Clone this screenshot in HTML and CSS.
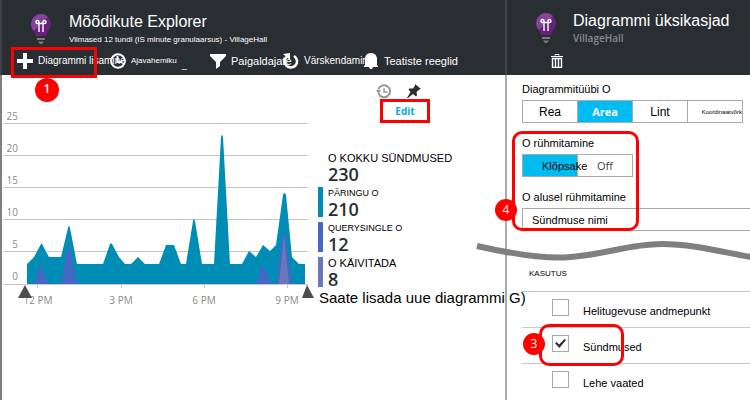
FILE: index.html
```html
<!DOCTYPE html>
<html lang="et">
<head>
<meta charset="utf-8">
<title>Mõõdikute Explorer</title>
<link rel="stylesheet" href="styles.css">
</head>
<body>
<svg class="sprite" aria-hidden="true">
  <symbol id="bulb" viewBox="0 0 20 32">
    <path d="M10 0a10 10 0 0 0-10 10c0 5 4 7 5 12h10c1-5 5-7 5-12A10 10 0 0 0 10 0z" fill="#68217a"/>
    <path d="M10 0a10 10 0 0 0-10 10c0 3 1.300 5 2.600 7L17 3A10 10 0 0 0 10 0z" fill="#83449a"/>
    <path d="M8 18V9.500M12 18V9.500M8 9.500H6.500a1.500 1.500 0 1 1 1.500-1.500zM12 9.500h1.500a1.500 1.500 0 1 0-1.500-1.500zM8 9.500h4" fill="none" stroke="#fff" stroke-width="1.400"/>
    <path d="M6 24h8v2H6zM7 27.500h6l-2 2.500H9z" fill="#777b7e"/>
  </symbol>
</svg>
<div class="app">
  <main class="blade blade-main">
    <header class="bar">
      <div class="heading">
        <svg class="bulb"><use href="#bulb"/></svg>
        <div>
          <h1>Mõõdikute Explorer</h1>
          <p class="scope">Viimased 12 tundi (IS minute granulaarsus) - VillageHall</p>
        </div>
      </div>
      <nav class="tools">
        <button type="button" class="medium"><svg class="icon" viewBox="0 0 16 16"><path d="M6 0h4v6h6v4h-6v6H6v-6H0V6h6z"/></svg>Diagrammi lisamine</button>
        <button type="button" class="small"><svg class="icon" viewBox="0 0 16 16"><circle cx="8" cy="8" r="6.800" fill="none" stroke="#fff" stroke-width="2"/><path d="M7.500 3v6h5" fill="none" stroke="#fff" stroke-width="2"/></svg><span>Ajavahemiku</span><span class="dash">_</span></button>
        <button type="button"><svg class="icon" viewBox="0 0 16 16"><path d="M0 1h16v2l-6 6v4l-4 3V9L0 3z"/></svg>Paigaldajate</button>
        <button type="button" class="medium"><svg class="icon" viewBox="0 0 16 16"><path d="M4 3.500A6.200 6.200 0 1 0 11 3" fill="none" stroke="#fff" stroke-width="2.600"/><path d="M0 1L7 0v7z"/></svg>Värskendamine</button>
        <button type="button"><svg class="icon" viewBox="0 0 16 16"><path d="M2 12V6c0-8 12-8 12 0v6l1 1v1h-5l-1 2H7l-1-2H1v-1z"/></svg>Teatiste reeglid</button>
      </nav>
    </header>
    <div class="content">
      <div class="chart-tools">
        <div class="chart-icons">
          <svg class="history" viewBox="0 0 16 15"><path d="M2.500 9.500a6 6 0 1 0-.2-4" fill="none" stroke="#95989a" stroke-width="2"/><path d="M0 6h5L2.500 10z" fill="#95989a"/><path d="M8 4v4h3.500" fill="none" stroke="#95989a" stroke-width="1.500"/></svg>
          <svg class="pin" viewBox="0 0 14 14"><path d="M8 0l6 5-1.500.5-3 2.500.5 3.500-1 1-3-2.500L1 14H0l3.500-6L1.500 5.500l1-1L6 4.500l2-3z" fill="#292e32"/></svg>
        </div>
        <button type="button" class="edit">Edit</button>
      </div>
      <div class="chart-row">
        <svg class="chart" viewBox="0 0 316 198" role="img" aria-label="Sündmused">
          <path class="grid" d="M1 12.500h305M1 44.500h305M1 76.500h305M1 108.500h305M1 140.500h305"/>
          <path fill="#008db5" d="M25 173V153L32 146 39 133Q39.500 131.500 40 133L47 146H59L66 117Q67 113 68 117L75 153H101L108 133Q109 131.500 110 133L117 146 123 153H129L136 146 143 153H157L164 134H172L179 153H184L191 110Q192 106 193 110L200 153H212L219 26Q220 22 221 26L228 153H240L247 140 254 146 261 134 268 140 274 134 281 84Q282.500 80 284 84L290 146 297 153H303V173z"/>
          <path fill="#4668c5" d="M32 173L39 152 46 173zM59 173L66 136Q67 132 68 136L75 173zM254 173L261 153 269 173zM274 173L281 122Q282 119 283 122L290 173z"/>
          <path fill="#6878bb" d="M277 173L282 125 287 173z"/>
          <path class="grid" d="M1 173.500h305M35.500 174v3M119.500 174v3M202.500 174v3M285.500 174v3"/>
          <g class="axis end"><text x="16" y="9">25</text><text x="16" y="41">20</text><text x="16" y="73">15</text><text x="16" y="105">10</text><text x="16" y="137">5</text><text x="16" y="169">0</text></g>
          <g class="axis mid"><text x="36" y="193">12 PM</text><text x="119" y="193">3 PM</text><text x="202" y="193">6 PM</text><text x="285" y="193">9 PM</text></g>
          <path fill="#4d4d4d" d="M23 174l7 13H16zM305 174l7 13H300z"/>
        </svg>
        <dl class="legend">
          <div class="total"><dt class="wide">O KOKKU SÜNDMUSED</dt><dd>230</dd></div>
          <div class="teal"><dt>PÄRINGU O</dt><dd>210</dd></div>
          <div class="blue"><dt>QUERYSINGLE O</dt><dd>12</dd></div>
          <div class="violet"><dt class="wide">O KÄIVITADA</dt><dd>8</dd></div>
        </dl>
      </div>
    </div>
  </main>
  <aside class="blade blade-side">
    <header class="bar">
      <div class="heading">
        <svg class="bulb"><use href="#bulb"/></svg>
        <div>
          <h2>Diagrammi üksikasjad</h2>
          <p class="place">VillageHall</p>
        </div>
      </div>
      <button type="button" class="trash" aria-label="Kustuta"><svg viewBox="0 0 12 14"><path d="M4 1.500V.5h4v1M0 2.500h12" fill="none" stroke="#fff"/><path d="M1.500 4.500h9v9h-9zM4.500 5v8M7.500 5v8" fill="none" stroke="#fff" stroke-width="1.400"/></svg></button>
    </header>
    <form class="details">
      <div class="field" role="group" aria-labelledby="type-label">
        <span id="type-label" class="caption">Diagrammitüübi O</span>
        <div class="segments four">
          <button type="button">Rea</button><button type="button" class="on">Area</button><button type="button">Lint</button><button type="button" class="tiny">Koordinaatvõrk</button>
        </div>
      </div>
      <div class="field" role="group" aria-labelledby="group-label">
        <span id="group-label" class="caption">O rühmitamine</span>
        <div class="segments two">
          <button type="button" class="click">Klõpsake</button><button type="button" class="off">Off</button>
        </div>
      </div>
      <div class="field">
        <label class="caption" for="group-by">O alusel rühmitamine</label>
        <input id="group-by" type="text" value="Sündmuse nimi">
      </div>
      <h3>KASUTUS</h3>
      <ul class="usage">
        <li><input type="checkbox" id="m1"><label for="m1">Helitugevuse andmepunkt</label></li>
        <li><input type="checkbox" id="m2" checked><label for="m2">Sündmused</label></li>
        <li><input type="checkbox" id="m3"><label for="m3">Lehe vaated</label></li>
      </ul>
    </form>
    <svg class="wave" viewBox="0 0 280 30"><path d="M5 13C40 21 72 25 92 24.500C130 23 155 11 190 11C220 11 250 19 284 25" fill="none" stroke="#7f7f7f" stroke-width="6"/></svg>
    <span class="ring ring-group"></span><span class="badge badge-4">4</span>
    <span class="ring ring-events"></span><span class="badge badge-3">3</span>
  </aside>
  <span class="ring ring-add"></span><span class="badge badge-1">1</span>
  <p class="note">Saate lisada uue diagrammi G)</p>
</div>
</body>
</html>
```
FILE: styles.css
```css
* { box-sizing: border-box; }
body { margin: 0; background: #fff; color: #000; font: 11px/16px "Liberation Sans", Arial, sans-serif; overflow: hidden; }
h1, h2, h3, p, dl, dd, ul { margin: 0; padding: 0; font-weight: 400; }
button { border: 0; padding: 0; background: none; color: inherit; font: inherit; cursor: pointer; }
.sprite { position: absolute; width: 0; height: 0; }
.app { position: relative; display: grid; grid-template-columns: minmax(0, 1fr) 245px; min-height: 100vh; }
.blade { display: flex; flex-direction: column; }
.blade-main { border-left: 2px solid #808080; }
.blade-side { position: relative; border-left: 2px solid #aaa; }

.bar { height: 75px; background: #292e32; color: #fff; }
.blade-main .bar { margin-left: -2px; border-left: 2px solid #3d4145; padding: 12px 0 0 15px; }
.blade-side .bar { margin-left: -2px; border-left: 2px solid #42464a; padding: 11px 0 0 14px; }
.heading { display: flex; gap: 18px; height: 36px; }
.blade-main .heading { padding-left: 14px; }
.blade-side .heading { padding-left: 15px; gap: 17px; }
.bulb { width: 20px; height: 32px; margin-top: 2px; flex: none; }
h1, h2 { font-size: 16px; line-height: 20px; white-space: nowrap; }
.scope { font-size: 8px; line-height: 16px; white-space: nowrap; }
.place { color: #85898c; font: 600 10px/14px "Open Sans", sans-serif; }

.tools { display: grid; grid-template-columns: 93px 100px 73px 80px 1fr; height: 26px; align-items: center; }
.tools button { display: flex; align-items: center; gap: 5px; width: 0; white-space: nowrap; }
.tools .medium { font-size: 10px; }
.tools .small { font-size: 8px; }
.dash { padding: 8px 0 0; font-size: 9px; }
.icon { width: 16px; height: 16px; flex: none; fill: #fff; position: relative; }
.trash { display: block; width: 12px; height: 14px; margin: 7px 0 0 30px; }
.trash svg { display: block; width: 12px; height: 14px; }

.content { padding-top: 8px; }
.chart-tools { display: flex; flex-direction: column; width: 50px; margin-left: auto; margin-right: 75px; }
.chart-icons { display: flex; align-items: center; justify-content: center; gap: 15px; height: 16px; padding-right: 10px; margin-left: -4px; }
.history { width: 16px; height: 15px; flex: none; }
.pin { width: 14px; height: 14px; flex: none; }
.edit { height: 24px; border: 3px solid #f00; color: #00abec; font: 700 10px/16px "Open Sans", sans-serif; }
.chart-row { display: flex; align-items: flex-start; margin-top: -12px; }
.chart { width: 316px; height: 198px; flex: none; overflow: visible; }
.grid { stroke: #c8c8c8; fill: none; }
.axis { font: 10px "Open Sans", sans-serif; fill: #8a8a8a; }
.end { text-anchor: end; }
.mid { text-anchor: middle; }
.legend { display: grid; gap: 5px; margin-top: 41px; }
.legend div { height: 30px; border-left: 5px solid transparent; padding-left: 5px; white-space: nowrap; }
.legend .teal { border-color: #008db5; }
.legend .blue { border-color: #4668c5; }
.legend .violet { border-color: #6878bb; }
dt { font-size: 9px; line-height: 12px; }
.wide { font-size: 11px; line-height: 12px; }
dd { color: #292e32; font: 600 18px/20px "Open Sans", sans-serif; }

.details { display: flex; flex-direction: column; padding: 7px 0 0 15px; overflow: hidden; }
.field { display: flex; flex-direction: column; margin-bottom: 13px; }
.caption { height: 18px; line-height: 15px; }
.segments { display: flex; height: 23px; }
.segments button { flex: 0 0 56px; min-width: 0; margin-right: -1px; border: 1px solid #aaa; overflow: hidden; white-space: nowrap; font-size: 12px; }
.segments .on { background: #00bcf2; color: #fff; font: 700 11px "Open Sans", sans-serif; }
.segments .tiny { font-size: 6px; text-align: right; }
.segments .click { background: #00bcf2; overflow: visible; position: relative; padding-left: 19px; text-align: left; font-size: 11px; }
.segments .off { color: #444; font: 11px "Open Sans", sans-serif; }
#group-by { height: 23px; margin-right: -10px; border: 1px solid #aaa; padding: 0 9px; font: inherit; }
h3 { margin-top: 22px; padding-left: 7px; font-size: 8px; line-height: 16px; }
.usage { list-style: none; margin-top: 9px; }
.usage li { display: flex; gap: 14px; height: 36px; border-top: 1px solid #c8c8c8; padding: 7px 0 0 30px; }
.usage label { padding-top: 4px; }
.usage input { appearance: none; width: 17px; height: 17px; margin: 0; border: 1px solid #aaa; background: #fff; }
.usage input:checked::before { content: ""; display: block; width: 11px; height: 9px; margin: 3px 2px; background: #292e32; clip-path: polygon(0 48%, 14% 34%, 38% 62%, 86% 0, 100% 12%, 40% 100%); }

.wave { position: absolute; left: -35px; top: 233px; width: 280px; height: 30px; }
.ring { position: absolute; border: 3px solid #f00; border-radius: 10px; pointer-events: none; }
.ring-add { left: 11px; top: 47px; width: 86px; height: 31px; border-radius: 0; }
.ring-group { left: 5px; top: 131px; width: 127px; height: 100px; }
.ring-events { left: 32px; top: 324px; width: 85px; height: 42px; }
.badge { position: absolute; width: 22px; height: 22px; border-radius: 50%; background: #f00; color: #fff; font: 12px/22px "Open Sans", sans-serif; text-align: center; }
.badge-1 { left: 35px; top: 78px; width: 24px; height: 24px; font-weight: 600; }
.badge-4 { left: -12px; top: 199px; }
.badge-3 { left: 16px; top: 333px; }
.note { position: absolute; left: 319px; top: 289px; font-size: 15px; line-height: 18px; white-space: nowrap; }
```
